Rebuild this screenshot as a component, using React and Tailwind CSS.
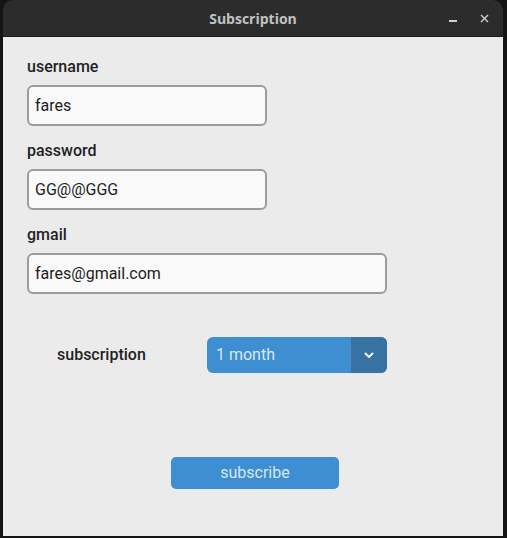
export default function App() {
  const inputCls =
    "h-[41px] rounded-[6px] border-2 border-[#9c9ca0] bg-[#f9f9f9] px-[6px] flex items-center text-[16px] text-[#1c1c1c]";
  const labelCls = "h-[20px] leading-[20px] text-[16px] font-medium text-[#1f1f1f]";
  return (
    <div className="w-[507px] h-[538px] bg-[#141414] flex" style={{ fontFamily: "Roboto, 'Liberation Sans', sans-serif" }}>
      <div className="ml-[3px] w-[500px] h-[536px] flex flex-col rounded-t-[10px] overflow-hidden">
        <div className="h-[37px] shrink-0 bg-[#2c2c2c] border-b border-[#1a1a1a] relative flex items-center justify-center">
          <span className="text-[14px] font-bold text-[#c2c2c2] mt-[1px]" style={{ fontFamily: "'Open Sans', sans-serif" }}>
            Subscription
          </span>
          <div className="absolute right-[46px] top-[20px] w-[8px] h-[1.5px] bg-[#d0d0d0]" />
          <svg className="absolute right-[14px] top-[14px]" width="9" height="9" viewBox="0 0 9 9">
            <path d="M1 1 L8 8 M8 1 L1 8" stroke="#d0d0d0" strokeWidth="1.4" fill="none" />
          </svg>
        </div>
        <div className="flex-1 bg-[#ebebeb] pl-[24px] pt-[20px] flex flex-col">
          <div className="flex flex-col gap-[15px]">
            <div className="flex flex-col gap-[8px]">
              <div className={labelCls}>username</div>
              <div className={inputCls + " w-[240px]"}>fares</div>
            </div>
            <div className="flex flex-col gap-[8px]">
              <div className={labelCls}>password</div>
              <div className={inputCls + " w-[240px]"}>GG@@GGG</div>
            </div>
            <div className="flex flex-col gap-[8px]">
              <div className={labelCls}>gmail</div>
              <div className={inputCls + " w-[360px]"}>fares@gmail.com</div>
            </div>
          </div>
          <div className="mt-[43px] flex items-center pl-[30px]">
            <div className="w-[150px] text-[16px] font-medium text-[#1f1f1f]">subscription</div>
            <div className="w-[180px] h-[36px] rounded-[6px] overflow-hidden flex bg-[#3d8fd1]">
              <div className="flex-1 flex items-center pl-[9px] text-[16px] text-[#dce8f4]">1 month</div>
              <div className="w-[36px] bg-[#3872a2] flex items-center justify-center">
                <svg width="10" height="7" viewBox="0 0 10 7">
                  <path d="M1.5 1.5 L5 5 L8.5 1.5" stroke="#eef3f8" strokeWidth="2" fill="none" strokeLinecap="round" strokeLinejoin="round" />
                </svg>
              </div>
            </div>
          </div>
          <div className="mt-[84px] ml-[144px] w-[168px] h-[32px] rounded-[5px] bg-[#3d8fd1] flex items-center justify-center text-[16px] text-[#d8e6f3]">
            subscribe
          </div>
        </div>
      </div>
    </div>
  );
}
